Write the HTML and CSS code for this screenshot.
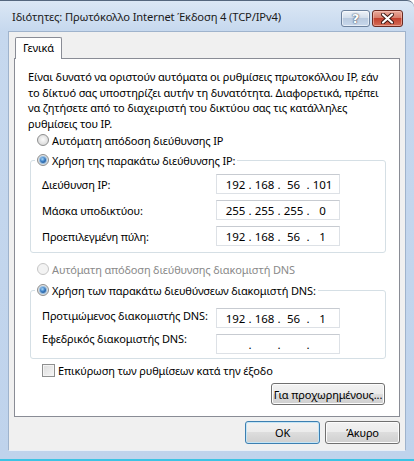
FILE: index.html
```html
<!DOCTYPE html>
<html lang="el">
<head>
    <meta charset="UTF-8">
    <meta name="viewport" content="width=device-width, initial-scale=1.0">
    <title>Ιδιότητες: Πρωτόκολλο Internet Έκδοση 4 (TCP/IPv4)</title>
    <link rel="stylesheet" href="styles.css">
</head>
<body>

<div class="window">
    <div class="titleBar">
        <span class="titleText">Ιδιότητες: Πρωτόκολλο Internet Έκδοση 4 (TCP/IPv4)</span>
        <button class="capBtn capHelp">?</button>
        <button class="capBtn capClose">
            <svg width="13" height="11" viewBox="0 0 13 11">
                <path d="M2 1.5 L11 9.5 M11 1.5 L2 9.5" stroke="#3a1510" stroke-width="4" stroke-linecap="round"/>
                <path d="M2 1.5 L11 9.5 M11 1.5 L2 9.5" stroke="#fff" stroke-width="2.2" stroke-linecap="round"/>
            </svg>
        </button>
    </div>

    <div class="client">
        <div class="tabs">
            <div class="tab">Γενικά</div>
        </div>

        <div class="panel">
            <p class="intro">Είναι δυνατό να οριστούν αυτόματα οι ρυθμίσεις πρωτοκόλλου IP, εάν<br>το δίκτυό σας υποστηρίζει αυτήν τη δυνατότητα. Διαφορετικά, πρέπει<br>να ζητήσετε από το διαχειριστή του δικτύου σας τις κατάλληλες<br>ρυθμίσεις του IP.</p>

            <label class="option"><span class="radio"></span>Αυτόματη απόδοση διεύθυνσης IP</label>

            <div class="group groupIp">
                <label class="option groupHead"><span class="radio checked"></span>Χρήση της παρακάτω διεύθυνσης IP:</label>
                <div class="fields">
                    <span class="fieldLabel">Διεύθυνση IP:</span>
                    <div class="ipBox"><span>192</span><i>.</i><span>168</span><i>.</i><span>56</span><i>.</i><span>101</span></div>
                    <span class="fieldLabel">Μάσκα υποδικτύου:</span>
                    <div class="ipBox"><span>255</span><i>.</i><span>255</span><i>.</i><span>255</span><i>.</i><span>0</span></div>
                    <span class="fieldLabel">Προεπιλεγμένη πύλη:</span>
                    <div class="ipBox"><span>192</span><i>.</i><span>168</span><i>.</i><span>56</span><i>.</i><span>1</span></div>
                </div>
            </div>

            <label class="option disabled"><span class="radio"></span>Αυτόματη απόδοση διεύθυνσης διακομιστή DNS</label>

            <div class="group groupDns">
                <label class="option groupHead"><span class="radio checked"></span>Χρήση των παρακάτω διευθύνσεων διακομιστή DNS:</label>
                <div class="fields">
                    <span class="fieldLabel up1">Προτιμώμενος διακομιστής DNS:</span>
                    <div class="ipBox"><span>192</span><i>.</i><span>168</span><i>.</i><span>56</span><i>.</i><span>1</span></div>
                    <span class="fieldLabel up2">Εφεδρικός διακομιστής DNS:</span>
                    <div class="ipBox"><span></span><i>.</i><span></span><i>.</i><span></span><i>.</i><span></span></div>
                </div>
            </div>

            <label class="check"><span class="checkBox"></span>Επικύρωση των ρυθμίσεων κατά την έξοδο</label>

            <div class="advRow">
                <button class="btn btnAdv">Για προχωρημένους...</button>
            </div>
        </div>

        <div class="footer">
            <button class="btn btnDefault">OK</button>
            <button class="btn">Άκυρο</button>
        </div>
    </div>
</div>

</body>
</html>
```

FILE: styles.css
```css
*{
    margin: 0px;
    padding: 0px;
    box-sizing: border-box;
}
body {
    background-color: #fff;
    font-family: "Noto Sans", "DejaVu Sans", sans-serif;
    font-size: 11px;
    letter-spacing: -0.15px;
    color: #000;
}
.window {
    width: 414px;
    height: 461px;
    display: flex;
    flex-direction: column;
    border-top: 1px solid #55677e;
    border-bottom: 2px solid #3cc3e4;
    border-top-right-radius: 7px;
    padding-bottom: 8px;
    background: linear-gradient(#dbe7f5 0px, #c6d8ee 30px, #bfd3ec 100%);
}
.titleBar {
    height: 30px;
    display: flex;
    align-items: flex-start;
    padding: 0 11px 0 12px;
}
.titleText {
    margin-top: 8px;
    line-height: 15px;
    font-size: 11.2px;
    color: #1a1a1a;
    flex: 1;
    white-space: nowrap;
}
.capBtn {
    margin-top: 9px;
    height: 17px;
    border-radius: 3px;
    display: flex;
    align-items: center;
    justify-content: center;
    font-family: "DejaVu Sans", sans-serif;
}
.capHelp {
    width: 29px;
    margin-right: 2px;
    border: 1px solid #6c819d;
    background: linear-gradient(#eef3f9 0%, #d3deeb 45%, #b9cadf 50%, #c8d8ec 100%);
    box-shadow: inset 0 0 0 1px rgba(255, 255, 255, .55);
    color: #fff;
    font-size: 13px;
    font-weight: bold;
    text-shadow: 0 0 1px #3d4c60, 0 0 2px #3d4c60;
}
.capClose {
    width: 31px;
    border: 1px solid #6a2a22;
    background: linear-gradient(#e9ab9d 0%, #d87d6b 45%, #c3412f 50%, #d36d57 100%);
    box-shadow: inset 0 0 0 1px rgba(255, 210, 200, .5);
}
.client {
    flex: 1;
    margin: 0 8px;
    display: flex;
    flex-direction: column;
    background-color: #f0f0f0;
    border: 1px solid #9fb3cc;
    border-bottom-color: #e9eff7;
}
.tabs {
    display: flex;
    margin: 5px 0 -1px 6px;
}
.tab {
    position: relative;
    z-index: 1;
    width: 47px;
    height: 22px;
    line-height: 20px;
    padding-left: 7px;
    background-color: #fff;
    border: 1px solid #898c95;
    border-bottom: none;
    border-radius: 2px 2px 0 0;
}
.panel {
    height: 359px;
    margin: 0 5px;
    display: flex;
    flex-direction: column;
    background-color: #fff;
    border: 1px solid #898c95;
}
.intro {
    margin: 10px 0 0 13px;
    line-height: 15.5px;
    white-space: nowrap;
}
.option {
    display: flex;
    align-items: center;
    height: 16px;
    margin: 1px 0 0 22px;
    white-space: nowrap;
}
.option.disabled {
    margin-top: 8px;
    color: #8a8a8a;
}
.radio {
    position: relative;
    width: 12px;
    height: 12px;
    margin-right: 3px;
    border-radius: 50%;
    border: 1px solid #8e8f8f;
    background: radial-gradient(circle at 50% 45%, #fbfbfb 0%, #e3e3e3 55%, #d0d0d0 100%);
}
.disabled .radio {
    border-color: #c6c6c6;
    background: #f3f3f3;
}
.radio.checked::after {
    content: "";
    position: absolute;
    left: 2px;
    top: 2px;
    width: 6px;
    height: 6px;
    border-radius: 50%;
    background: radial-gradient(circle at 40% 35%, #a8d8f8 0%, #3d7fc4 45%, #0f3f7c 100%);
    box-shadow: 0 0 0 1px #94bde2;
}
.group {
    margin: 12px 13px 0 15px;
    padding: 0 0 6px 11px;
    border: 1px solid #d5dfe5;
    border-radius: 3px;
}
.groupDns {
    margin-top: 13px;
    padding-bottom: 4px;
}
.groupHead {
    width: max-content;
    margin: -9px 0 0 -7px;
    padding: 0 2px;
    background-color: #fff;
}
.fields {
    display: grid;
    grid-template-columns: 174px 124px;
    grid-auto-rows: 20px;
    row-gap: 6px;
    margin-top: 6px;
    align-items: center;
}
.groupDns .fields {
    margin-top: 10px;
}
.fieldLabel {
    white-space: nowrap;
    line-height: 15px;
}
.fieldLabel.up1 {
    margin-top: -5px;
}
.fieldLabel.up2 {
    margin-top: -11px;
}
.ipBox {
    height: 20px;
    display: flex;
    align-items: center;
    padding-left: 6px;
    border: 1px solid #dde1e6;
    border-top-color: #c7cbd1;
    background-color: #fff;
    font-size: 11.5px;
}
.ipBox span {
    width: 25px;
    text-align: center;
}
.ipBox i {
    width: 4px;
    font-style: normal;
    text-align: center;
}
.check {
    display: flex;
    align-items: center;
    height: 16px;
    margin: 3px 0 0 27px;
}
.checkBox {
    width: 13px;
    height: 13px;
    margin-right: 3px;
    border: 1px solid #8e8f8f;
    background: linear-gradient(135deg, #dcdcdc, #f6f6f6);
    box-shadow: inset 0 0 0 1px #f4f4f4;
}
.advRow {
    display: flex;
    justify-content: flex-end;
    margin: 5px 14px 0 0;
}
.btn {
    height: 23px;
    width: 75px;
    font-family: inherit;
    font-size: 11px;
    letter-spacing: inherit;
    white-space: nowrap;
    color: #000;
    border: 1px solid #707070;
    border-radius: 3px;
    background: linear-gradient(#f2f2f2 0%, #ebebeb 50%, #dddddd 50%, #cfcfcf 100%);
    box-shadow: inset 0 0 0 1px #fcfcfc;
}
.btnAdv {
    width: 114px;
    height: 22px;
}
.btnDefault {
    border-color: #3c7fb1;
    box-shadow: inset 0 0 0 1px #c4e5f6;
}
.footer {
    display: flex;
    justify-content: flex-end;
    gap: 5px;
    margin-top: 4px;
    padding-right: 5px;
}
```
